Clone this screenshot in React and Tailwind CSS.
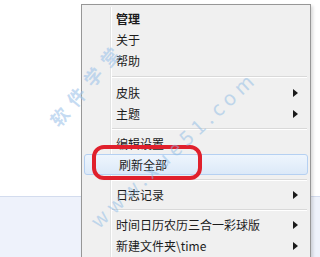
import React from "react";

const font = { fontFamily: '"Noto Sans CJK SC", "Noto Sans", sans-serif' };

function Arrow() {
  return (
    <svg width="5" height="8" viewBox="0 0 5 8" className="absolute right-[12px] top-1/2 -translate-y-1/2">
      <path d="M0 0 L5 4 L0 8 Z" fill="#1a1a1a" />
    </svg>
  );
}

function Item({ label, bold, sub, active }) {
  return (
    <div
      className={
        "relative h-[21px] flex items-center pl-[34px] text-[12px] text-[#1b1b1b] " +
        (active
          ? "mx-[2px] pl-[32px] rounded-[3px] border border-[#b5d0f2] bg-gradient-to-b from-[#eef5fd] to-[#dce9f8]"
          : "")
      }
    >
      <span className={bold ? "font-bold" : ""}>{label}</span>
      {sub && <Arrow />}
    </div>
  );
}

function Sep({ h = "h-[9px]" }) {
  return (
    <div className={h + " flex flex-col justify-center pl-[30px] pr-[3px]"}>
      <div className="h-px bg-[#d9d9d9]" />
      <div className="h-px bg-white" />
    </div>
  );
}

export default function App() {
  return (
    <div className="relative w-[320px] h-[257px] overflow-hidden bg-white" style={font}>
      <div className="h-[196px] bg-white" />
      <div className="h-px bg-[#d3dcee]" />
      <div className="h-[60px] bg-[#eef2fb]" />

      <div className="absolute left-[81px] top-[4px] w-[230px] h-[270px] bg-[#f0f0f0] border border-[#979797] shadow-[2px_2px_3px_rgba(0,0,0,0.15)] pt-[3px]">
        <div className="absolute left-[28px] top-[2px] bottom-0 w-px bg-[#e2e3e3]" />
        <div className="absolute left-[29px] top-[2px] bottom-0 w-px bg-white" />
        <div className="relative flex flex-col">
          <Item label="管理" bold />
          <Item label="关于" />
          <Item label="帮助" />
          <Sep h="h-[11px]" />
          <Item label="皮肤" sub />
          <Item label="主题" sub />
          <Sep />
          <Item label="编辑设置" />
          <Item label="刷新全部" active />
          <Sep />
          <Item label="日志记录" sub />
          <Sep />
          <Item label="时间日历农历三合一彩球版" sub />
          <Item label="新建文件夹\time" sub />
        </div>
      </div>

      <div className="absolute left-[92px] top-[145px] w-[110px] h-[35px] rounded-[12px] border-[4px] border-[#e0202c]" />

      <span className="absolute left-[35px] top-[70px] -rotate-[50deg] text-[18px] font-bold tracking-[8px] text-[#9fc4ea] opacity-60 whitespace-nowrap">
        软件学堂
      </span>
      <span className="absolute left-[64px] top-[134px] -rotate-[43deg] text-[20px] tracking-[5px] text-[#8dbbe6] opacity-50 whitespace-nowrap">
        www.xue51.com
      </span>
    </div>
  );
}
